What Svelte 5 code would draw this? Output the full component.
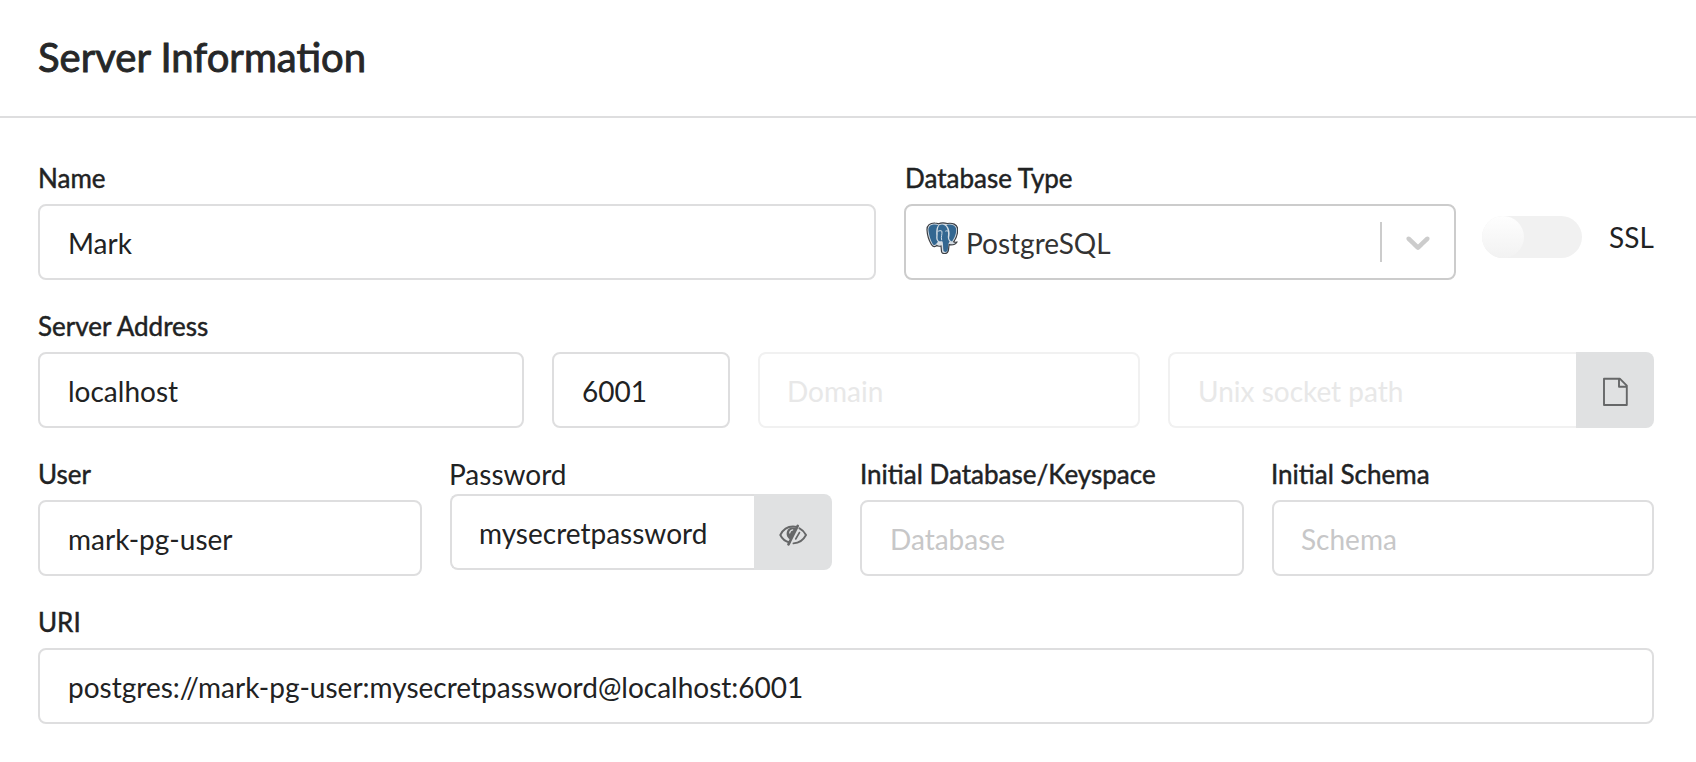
<script>
  let name = $state('Mark');
  let host = $state('localhost');
  let port = $state('6001');
  let user = $state('mark-pg-user');
  let password = $state('mysecretpassword');
  const uri = $derived(`postgres://${user}:${password}@${host}:${port}`);
</script>

<header>
  <h1>Server Information</h1>
</header>

<main>
  <div class="fields general">
    <div class="field">
      <label for="name">Name</label>
      <input id="name" bind:value={name} />
    </div>
    <div class="field">
      <span class="label type-label">Database Type</span>
      <div class="select">
        <svg class="pg" viewBox="0 0 32 32" width="32" height="32">
          <path d="M9 1C4 .8.8 3.300 1 8c.2 4 2 10.500 4.400 14.500 1.600 2.600 3.800 2.800 5.400.9 1 .9 2.700 1 4.200.6l.5 5.500c.4 2.800 5.500 3 6.600-.2.800-2.300.6-4.600 1-6.600 2.800.3 6.400-.2 7.700-2.500-1.100.1-2.500.2-3.200-.4 2.600-3.700 4.300-9.300 4-13C31.200 2.500 26.500.5 21.300 1.500 17.500.3 14.500.8 12.500 1.800 11.500 1.300 10.300 1 9 1Z" fill="#d5dde4" stroke="#3c3f44" stroke-width="1.200" />
          <path d="M9 2.500C4.700 2.300 2.300 4.500 2.400 8c.3 4 2 10 4 13.400 1.200 2 2.500 2 3.700.6l1.900-2.300c-1.700-1.500-2-3.500-1.700-6C10.100 9.500 10.100 5.500 12.500 3.100 11.500 2.700 10.300 2.500 9 2.500Z" fill="#336791" />
          <path d="M20.300 2.900c4.200-1.300 9 .1 9.800 3.600.7 4.200-1.500 9.500-4 13-1.700-.6-2.800-1.800-3-3.500.7-3 .8-5.500-.1-8.500-.4-1.800-1.500-3.600-2.700-4.600Z" fill="#336791" />
          <path d="M13.300 3.300c2.600-1.500 5.500-.8 7.100 1.700 1.700 2.700 1.900 6.500 1.400 10 0 2 .7 3.200 1.800 4.500-1.800 2-1.200 5.500-1.900 8.800-.6 2.200-3.900 2.300-4.300.3-.5-3-.1-6-.8-9-1.800.4-4.700-.2-5-2.500-.2-1.500.1-3.500.1-5.500-.1-3 .100-6.500 1.600-8.300Z" fill="#336791" />
          <path d="M11.700 9.500c1.500-1 3.200-1.100 4.200-.3.500 3.500-1.200 5.300-.2 9M22.300 9.500c-1.100-.9-2.200-.9-3-.2M15.800 19.200l-3.400 2.200" fill="none" stroke="#dfe7ee" stroke-width=".9" />
        </svg>
        <span class="value">PostgreSQL</span>
        <i class="divider"></i>
        <svg class="chevron" width="40" height="40" viewBox="0 0 20 20"><path fill="#ccc" d="M4.516 7.548c0.436-0.446 1.043-0.481 1.576 0l3.908 3.747 3.908-3.747c0.533-0.481 1.141-0.446 1.574 0 0.436 0.445 0.408 1.197 0 1.615-0.406 0.418-4.695 4.502-4.695 4.502-0.217 0.223-0.502 0.335-0.787 0.335s-0.570-0.112-0.789-0.335c0 0-4.287-4.084-4.695-4.502s-0.436-1.170 0-1.615z" /></svg>
      </div>
    </div>
    <div class="ssl">
      <i class="toggle"></i>
      <span>SSL</span>
    </div>
  </div>

  <div class="fields address">
    <div class="field">
      <label for="host">Server Address</label>
      <input id="host" bind:value={host} />
    </div>
    <div class="field"><input bind:value={port} /></div>
    <div class="field"><input class="disabled snug" placeholder="Domain" disabled /></div>
    <div class="field">
      <div class="action">
        <input class="disabled" placeholder="Unix socket path" disabled />
        <button aria-label="file">
          <svg width="26" height="32" viewBox="0 0 26 32" fill="none" stroke="#666768" stroke-width="1.900" stroke-linejoin="round"><path d="M2 4.700h15.800l7 7V31H2V4.700ZM17 4.700v8h7.800" /></svg>
        </button>
      </div>
    </div>
  </div>

  <div class="fields login">
    <div class="field">
      <label for="user">User</label>
      <input id="user" bind:value={user} />
    </div>
    <div class="field password">
      <span>Password</span>
      <div class="action">
        <input class="snug" bind:value={password} />
        <button aria-label="visibility">
          <svg class="eye" width="28" height="22" viewBox="0 0 28 22" fill="none" stroke="#666768" stroke-width="1.900" stroke-linecap="round">
            <path d="M10.500 18.500C6.500 17.500 3 14.500 1.300 11 4 5.500 9 2.500 14 2.500c1.200 0 2.300.1 3.400.4M20.500 4.300C23.500 5.800 25.700 8.200 27 11c-2.500 4.800-7 8-12.500 8.400" />
            <path d="M18.700 1.800 9.500 20.300" stroke-width="2.600" />
            <path d="M9 5.500c-2.500 3.500-1.500 8 2.200 10L17 4C14 3 11 3.500 9 5.500Z" fill="#666768" stroke="none" />
            <path d="m20.500 8.500-3.800 6.500" stroke-width="1.600" />
            <path d="M10.700 9c.2-1.800 1.500-3 3-3.200" stroke="#e0e1e2" stroke-width="1.200" />
          </svg>
        </button>
      </div>
    </div>
    <div class="field">
      <label for="db">Initial Database/Keyspace</label>
      <input id="db" placeholder="Database" />
    </div>
    <div class="field">
      <label class="schema-label" for="schema">Initial Schema</label>
      <input class="snug" id="schema" placeholder="Schema" />
    </div>
  </div>

  <div class="fields">
    <div class="field">
      <label for="uri">URI</label>
      <input id="uri" value={uri} />
    </div>
  </div>
</main>

<style>
  :global(body) {
    background: #fff;
    color: #212223;
    font: 28px/40px Lato, 'Liberation Sans', sans-serif;
    overflow: hidden;
  }
  header {
    box-sizing: border-box;
    height: 118px;
    padding: 32px 38px 0;
    border-bottom: 2px solid #dededf;
  }
  h1 {
    margin: 0;
    color: #262728;
    font-size: 40px;
    line-height: 51px;
    font-weight: 400;
    -webkit-text-stroke: 0.9px currentColor;
  }
  main { padding: 42px 42px 0 38px; }
  .fields {
    display: grid;
    grid-template-columns: 1fr;
    column-gap: 28px;
    align-items: end;
    height: 120px;
    margin-bottom: 28px;
  }
  .general { grid-template-columns: 838px 552px 1fr; }
  .address { grid-template-columns: 486px 178px 382px 486px; }
  .login { grid-template-columns: 384px 382px 384px 382px; }
  .field { min-width: 0; }
  label, .label {
    display: block;
    height: 36px;
    margin-bottom: 8px;
    font-size: 26px;
    line-height: 37px;
    white-space: nowrap;
    -webkit-text-stroke: 0.45px currentColor;
  }
  .type-label { margin-left: 1px; }
  .schema-label { margin-left: -1px; }
  input {
    display: block;
    box-sizing: border-box;
    width: 100%;
    height: 76px;
    margin: 0;
    padding: 2px 28px 0;
    border: 2px solid #dededf;
    border-radius: 8px;
    background: #fff;
    color: #212223;
    font: inherit;
    outline: 0;
  }
  input.snug { padding-left: 27px; }
  input::placeholder { color: #c7c7c8; opacity: 1; }
  input.disabled { border-color: #f1f1f1; }
  input.disabled::placeholder { color: #e8e8e8; }
  .select {
    box-sizing: border-box;
    display: flex;
    align-items: center;
    height: 76px;
    padding: 0 16px 0 20px;
    border: 2px solid #ccc;
    border-radius: 8px;
    color: #333;
  }
  .pg { flex: none; margin: -8px 8px 0 0; }
  .value { flex: 1; padding-top: 1px; }
  .divider { width: 2px; height: 40px; background: #ccc; }
  .chevron { margin-left: 16px; }
  .ssl { display: flex; align-items: center; gap: 27px; height: 42px; margin: 0 0 22px -2px; white-space: nowrap; }
  .ssl span { padding-bottom: 1px; }
  .toggle { flex: none; width: 100px; height: 42px; border-radius: 21px; background: #f1f1f1; }
  .toggle::before {
    content: '';
    display: block;
    width: 42px;
    height: 42px;
    border-radius: 50%;
    background: linear-gradient(#fefefe, #f2f2f2);
  }
  .action { display: flex; }
  .action input { flex: 1; min-width: 0; border-right: 0; border-radius: 8px 0 0 8px; }
  button {
    display: flex;
    align-items: center;
    justify-content: center;
    width: 78px;
    height: 76px;
    padding: 0;
    border: 0;
    border-radius: 0 8px 8px 0;
    background: #e0e1e2;
  }
  .eye { margin-top: 6px; }
  .password { align-self: start; margin-top: -2px; }
  .password > span { display: block; height: 40px; margin-left: -1px; line-height: 41px; }
</style>
